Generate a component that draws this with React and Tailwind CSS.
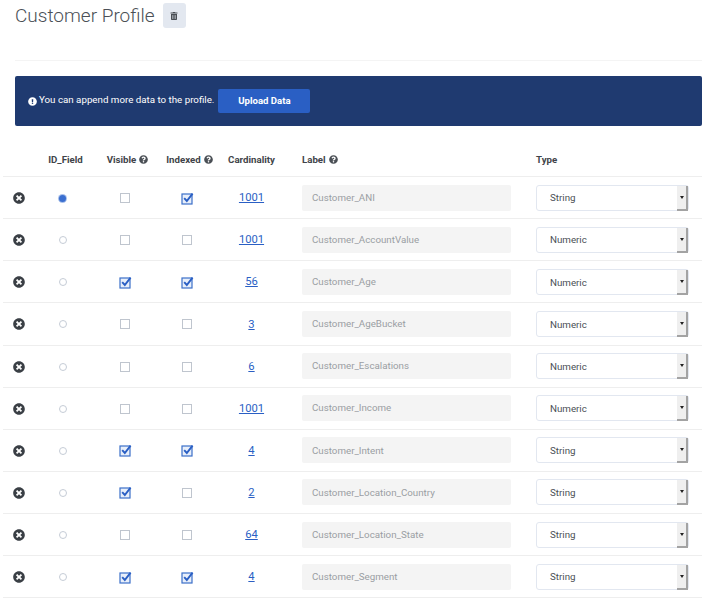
import React from "react";
import { FaTimesCircle, FaQuestionCircle, FaExclamationCircle, FaTrashAlt } from "react-icons/fa";

const rows = [
  { visible: false, indexed: true, card: "1001", label: "Customer_ANI", type: "String", id: true },
  { visible: false, indexed: false, card: "1001", label: "Customer_AccountValue", type: "Numeric" },
  { visible: true, indexed: true, card: "56", label: "Customer_Age", type: "Numeric" },
  { visible: false, indexed: false, card: "3", label: "Customer_AgeBucket", type: "Numeric" },
  { visible: false, indexed: false, card: "6", label: "Customer_Escalations", type: "Numeric" },
  { visible: false, indexed: false, card: "1001", label: "Customer_Income", type: "Numeric" },
  { visible: true, indexed: true, card: "4", label: "Customer_Intent", type: "String" },
  { visible: true, indexed: false, card: "2", label: "Customer_Location_Country", type: "String" },
  { visible: false, indexed: false, card: "64", label: "Customer_Location_State", type: "String" },
  { visible: true, indexed: true, card: "4", label: "Customer_Segment", type: "String" },
];

const gridCols = "grid grid-cols-[32px_55px_70px_54px_75px_247px_163px] items-center";

const Check = ({ on }) =>
  on ? (
    <svg width="13" height="13" viewBox="0 0 13 13" className="overflow-visible">
      <rect x="1" y="2" width="10" height="10" fill="#e8effa" stroke="#3b6fc9" strokeWidth="1.2" />
      <path d="M3.2 6.2 L5.8 9 L11.6 1.6" fill="none" stroke="#2a5fc4" strokeWidth="1.9" />
    </svg>
  ) : (
    <div className="w-[10px] h-[10px] border border-[#bfc5ce] bg-white" />
  );

const Radio = ({ on }) =>
  on ? (
    <div className="w-[7px] h-[7px] rounded-full bg-[#3b6fd0] ring-1 ring-[#a9c0ea]" />
  ) : (
    <div className="w-[8px] h-[8px] rounded-full border border-[#c5ccd6] bg-white" />
  );

const TypeSelect = ({ value }) => (
  <div className="relative w-[153px] h-[26px] bg-white border border-[#e2e7f0] rounded-[3px] flex items-center pl-[13px] pt-[2px] text-[9.75px] text-[#4a4f55]">
    {value}
    <div className="absolute right-0 top-0 w-[11px] h-[25px] bg-[#efefef] border-r-2 border-b-2 border-[#a3a3a3] flex items-center justify-center">
      <div className="w-0 h-0 border-l-[2.5px] border-r-[2.5px] border-t-[3px] border-l-transparent border-r-transparent border-t-[#222]" />
    </div>
  </div>
);

const Hint = () => <FaQuestionCircle className="inline-block text-[#4a4f55] text-[9px] ml-[3px] align-[-1px]" />;

export default function App() {
  return (
    <div className="w-[702px] h-[599px] overflow-hidden bg-white font-['Roboto',sans-serif] text-[#3f444a]">
      <div className="h-[61px] ml-[15px] border-b border-[#f4f4f4] flex items-start pt-[3px] gap-[8px]">
        <h1 className="text-[19px] leading-[25px] font-light text-[#4b5056]">Customer Profile</h1>
        <button className="w-[23px] h-[25px] rounded-[3px] bg-[#e3e8f0] flex items-center justify-center text-[#4a4f55]">
          <FaTrashAlt className="text-[8px]" />
        </button>
      </div>

      <div className="mt-[15px] ml-[15px] h-[50px] bg-[#1f3a70] rounded-[2px] flex items-center pl-[13px] text-white text-[9.75px]">
        <FaExclamationCircle className="text-[9px] mr-[2px]" />
        <span className="mr-[4px] -mt-[1px]">You can append more data to the profile.</span>
        <button className="w-[92px] h-[24px] bg-[#2a5fc4] rounded-[2px] pt-[1px] text-[9.6px] font-bold text-white">Upload Data</button>
      </div>

      <div className="mt-[12px] pl-[3px]">
        <div className={`${gridCols} h-[39px] border-b border-[#eeeeee] pt-[7px] text-[9.7px] font-bold text-[#3f444a]`}>
          <div />
          <div className="text-center whitespace-nowrap pl-[6px]">ID_Field</div>
          <div className="text-center whitespace-nowrap pl-[5px]">Visible<Hint /></div>
          <div className="text-center whitespace-nowrap pl-[5px]">Indexed<Hint /></div>
          <div className="text-center whitespace-nowrap">Cardinality</div>
          <div className="pl-[13px]">Label<Hint /></div>
          <div>Type</div>
        </div>

        {rows.map((row, i) => (
          <div key={i} className={`${gridCols} h-[42.13px] border-b border-[#eeeeee]`}>
            <div className="flex justify-center pt-[1px]">
              <FaTimesCircle className="text-[12px] text-[#3a3f45]" />
            </div>
            <div className="flex justify-center pt-[1px]"><Radio on={row.id} /></div>
            <div className="flex justify-center pt-[1px]"><Check on={row.visible} /></div>
            <div className="flex justify-center pt-[1px]"><Check on={row.indexed} /></div>
            <a className="text-center pt-[2px] text-[11.2px] text-[#2a5fc4] underline">{row.card}</a>
            <div className="pl-[13px]">
              <div className="w-[209px] h-[26px] bg-[#f4f4f4] rounded-[2px] flex items-center pl-[10px] pt-[1px] text-[9.75px] text-[#9a9ea3]">
                {row.label}
              </div>
            </div>
            <TypeSelect value={row.type} />
          </div>
        ))}
      </div>
    </div>
  );
}
